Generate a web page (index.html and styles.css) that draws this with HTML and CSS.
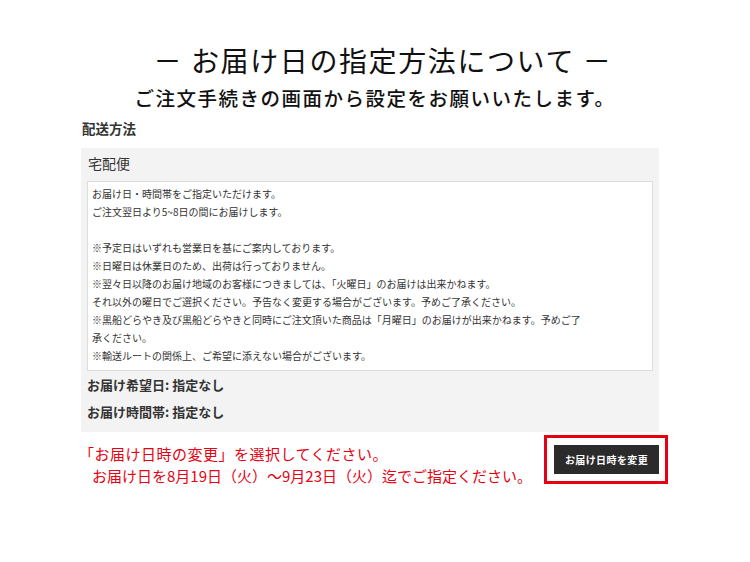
FILE: index.html
```html
<!DOCTYPE html>
<html lang="ja">
<head>
  <meta charset="utf-8">
  <link rel="stylesheet" href="styles.css">
</head>
<body>
  <header class="heading">
    <h1 class="title">－ お届け日の指定方法について －</h1>
    <p class="subtitle">ご注文手続きの画面から設定をお願いいたします。</p>
  </header>

  <main class="page">
    <h2 class="section-label">配送方法</h2>

    <div class="delivery-box">
      <div class="delivery-name">宅配便</div>
      <div class="delivery-note">
        お届け日・時間帯をご指定いただけます。<br>
        ご注文翌日より5~8日の間にお届けします。<br>
        <br>
        ※予定日はいずれも営業日を基にご案内しております。<br>
        ※日曜日は休業日のため、出荷は行っておりません。<br>
        ※翌々日以降のお届け地域のお客様につきましては、「火曜日」のお届けは出来かねます。<br>
        それ以外の曜日でご選択ください。予告なく変更する場合がございます。予めご了承ください。<br>
        ※黒船どらやき及び黒船どらやきと同時にご注文頂いた商品は「月曜日」のお届けが出来かねます。予めご了<br>
        承ください。<br>
        ※輸送ルートの関係上、ご希望に添えない場合がございます。
      </div>
      <div class="delivery-row">お届け希望日: 指定なし</div>
      <div class="delivery-row">お届け時間帯: 指定なし</div>
    </div>

    <div class="actions">
      <div class="notice">
        <div class="notice-first">「お届け日時の変更」を選択してください。</div>
        <div class="notice-second">お届け日を8月19日（火）～9月23日（火）迄でご指定ください。</div>
      </div>
      <div class="btn-frame">
        <button class="change-btn">お届け日時を変更</button>
      </div>
    </div>
  </main>
</body>
</html>
```

FILE: styles.css
```css
body {
  margin: 0;
  padding: 42px 0 0;
  background-color: #ffffff;
  font-family: "Noto Sans CJK JP", "Noto Sans", sans-serif;
  color: #222222;
}

.heading {
  text-align: center;
}

.title {
  margin: 0;
  padding-left: 16px;
  font-size: 28px;
  line-height: 36px;
  font-weight: 400;
  letter-spacing: 1.6px;
  color: #111111;
}

.subtitle {
  margin: 7px 0 0;
  font-size: 19.5px;
  line-height: 26px;
  font-weight: 500;
  letter-spacing: 1.5px;
  color: #111111;
}

.page {
  width: 578px;
  margin-left: 81px;
}

.section-label {
  margin: 7px 0 0 1px;
  font-size: 13.5px;
  line-height: 20px;
  font-weight: 700;
  color: #333333;
}

.delivery-box {
  margin-top: 10px;
  padding: 5px 6px 7px;
  background: #f3f3f3;
}

.delivery-name {
  font-size: 14px;
  line-height: 20px;
  color: #333333;
  padding-left: 1px;
}

.delivery-note {
  margin-top: 8px;
  padding: 3px 4px 5px;
  border: 1px solid #dddddd;
  background: #ffffff;
  font-size: 10px;
  line-height: 18px;
  color: #333333;
}

.delivery-row {
  font-size: 13px;
  line-height: 27px;
  font-weight: 700;
  color: #333333;
}

.delivery-row:first-of-type {
  margin-top: 2px;
}

.actions {
  display: flex;
  justify-content: space-between;
  align-items: flex-start;
  width: 587px;
  margin-top: 3px;
}

.notice {
  margin-top: 8px;
  font-size: 15px;
  line-height: 22px;
  color: #e60012;
}

.notice-first {
  margin-left: -2px;
  letter-spacing: 0.5px;
}

.notice-second {
  margin-left: 11px;
}

.btn-frame {
  border: 3px solid #e60012;
  padding: 7px 6px 7px 7px;
}

.change-btn {
  display: block;
  width: 105px;
  height: 29px;
  padding: 0;
  border: none;
  background: #2b2b2b;
  color: #ffffff;
  font-family: "Noto Sans CJK JP", sans-serif;
  font-size: 10px;
  font-weight: 700;
  letter-spacing: 0.4px;
}
```
